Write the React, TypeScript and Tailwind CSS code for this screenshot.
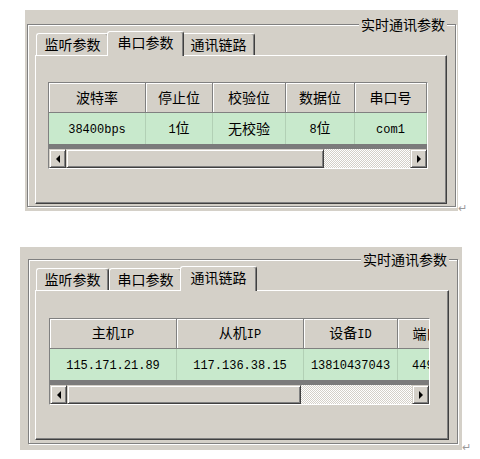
import React from "react";

const Txt = ({ s }: { s: string }) => {
  const parts = s.split(/([\x20-\x7e]+)/).filter((p) => p.length > 0);
  return (
    <span className="whitespace-nowrap">
      {parts.map((p, i) =>
        /^[\x20-\x7e]+$/.test(p) ? (
          <span key={i} className="font-['Liberation_Mono',monospace] text-[12px]">
            {p}
          </span>
        ) : (
          <span key={i}>{p}</span>
        )
      )}
    </span>
  );
};

const TABS = ["监听参数", "串口参数", "通讯链路"];

function TabStrip({ active }: { active: number }) {
  return (
    <div className="relative z-10 flex items-end h-[24px] pl-[1px]">
      {TABS.map((t, i) =>
        i === active ? (
          <div
            key={t}
            className="relative z-10 w-[77px] -mx-[2px] h-[25px] -mb-px flex-none bg-[#d4d0c8] border-t border-l border-r border-t-white border-l-white border-r-[#404040] shadow-[inset_-1px_0_0_#808080] rounded-t-[3px] flex items-start justify-center pt-[2px] text-[14px] leading-[17px] text-black"
          >
            {t}
          </div>
        ) : (
          <div
            key={t}
            className="w-[73px] h-[22px] flex-none bg-[#d4d0c8] border-t border-l border-r border-t-white border-l-white border-r-[#404040] shadow-[inset_-1px_0_0_#808080] rounded-t-[3px] flex items-center justify-center text-[14px] leading-[17px] text-black"
          >
            {t}
          </div>
        )
      )}
    </div>
  );
}

type Col = { label: string; w: string; val: string };

function ScrollBtn({ dir }: { dir: "l" | "r" }) {
  return (
    <div className="w-[17px] h-full flex-none bg-[#d4d0c8] border border-t-[#d4d0c8] border-l-[#d4d0c8] border-r-[#404040] border-b-[#404040] shadow-[inset_1px_1px_0_#fff,inset_-1px_-1px_0_#808080] flex items-center justify-center">
      {dir === "l" ? (
        <div className="w-0 h-0 border-y-[4px] border-y-transparent border-r-[4px] border-r-black" />
      ) : (
        <div className="w-0 h-0 border-y-[4px] border-y-transparent border-l-[4px] border-l-black" />
      )}
    </div>
  );
}

function ListView({ cols, width, thumb }: { cols: Col[]; width: string; thumb: string }) {
  return (
    <div
      className={`${width} flex flex-col overflow-hidden border border-t-[#808080] border-l-[#808080] border-r-white border-b-white`}
    >
      <div className="flex h-[30px] bg-[#d4d0c8]">
        {cols.map((c) => (
          <div
            key={c.label}
            className={`${c.w} flex-none flex items-center justify-center border-r border-b border-r-[#808080] border-b-[#808080] shadow-[inset_1px_1px_0_#fff] text-[14px] leading-[17px] text-black`}
          >
            <Txt s={c.label} />
          </div>
        ))}
      </div>
      <div className="flex h-[31px] bg-[#c8e9cc]">
        {cols.map((c) => (
          <div
            key={c.label}
            className={`${c.w} flex-none flex items-center justify-center border-r border-r-[#b2d0b5] text-[14px] leading-[17px] text-black overflow-hidden`}
          >
            <Txt s={c.val} />
          </div>
        ))}
      </div>
      <div className="h-[5px] bg-[#7b7b7b]" />
      <div className="flex h-[19px]">
        <ScrollBtn dir="l" />
        <div
          className={`${thumb} h-full flex-none bg-[#d4d0c8] border border-t-[#d4d0c8] border-l-[#d4d0c8] border-r-[#404040] border-b-[#404040] shadow-[inset_1px_1px_0_#fff,inset_-1px_-1px_0_#808080]`}
        />
        <div className="flex-1 h-full bg-[repeating-conic-gradient(#ffffff_0_25%,#d4d0c8_0_50%)] bg-[length:2px_2px]" />
        <ScrollBtn dir="r" />
      </div>
    </div>
  );
}

function Panel({
  outer,
  group,
  body,
  active,
  cols,
  width,
  thumb,
}: {
  outer: string;
  group: string;
  body: string;
  active: number;
  cols: Col[];
  width: string;
  thumb: string;
}) {
  return (
    <div className={`${outer} flex-none bg-[#d4d0c8] flex flex-col`}>
      <div
        className={`${group} relative flex-1 flex flex-col border border-[#808080] shadow-[inset_1px_1px_0_#fff,1px_1px_0_#fff]`}
      >
        <div className="absolute right-[8px] -top-[10px] px-[2px] bg-[#d4d0c8] text-[14px] leading-[18px] text-black">
          实时通讯参数
        </div>
        <TabStrip active={active} />
        <div
          className={`${body} flex-1 bg-[#d4d0c8] border-t border-l border-r border-b border-t-white border-l-white border-r-[#404040] border-b-[#404040] shadow-[inset_-1px_-1px_0_#808080]`}
        >
          <ListView cols={cols} width={width} thumb={thumb} />
        </div>
      </div>
    </div>
  );
}

export default function App() {
  const cols1: Col[] = [
    { label: "波特率", w: "w-[97px]", val: "38400bps" },
    { label: "停止位", w: "w-[67px]", val: "1位" },
    { label: "校验位", w: "w-[73px]", val: "无校验" },
    { label: "数据位", w: "w-[69px]", val: "8位" },
    { label: "串口号", w: "w-[72px]", val: "com1" },
  ];
  const cols2: Col[] = [
    { label: "主机IP", w: "w-[127px]", val: "115.171.21.89" },
    { label: "从机IP", w: "w-[127px]", val: "117.136.38.15" },
    { label: "设备ID", w: "w-[94px]", val: "13810437043" },
    { label: "端口", w: "w-[58px]", val: "4495" },
  ];
  return (
    <div className="w-[480px] h-[459px] bg-white flex flex-col font-['Noto_Sans_CJK_SC',sans-serif] overflow-hidden">
      <div className="flex items-end mt-[10px] ml-[25px]">
        <Panel
          outer="w-[433px] h-[201px] pt-[14px] pb-[4px] pl-[2px] pr-[2px]"
          group="pt-[6px] pb-[2px] pl-[7px] pr-[8px]"
          body="pt-[26px] pl-[12px]"
          active={1}
          cols={cols1}
          width="w-[380px]"
          thumb="w-[258px]"
        />
        <span className="text-[11px] leading-none text-[#9a9a9a] -mb-[2px]">↵</span>
      </div>
      <div className="flex items-end mt-[36px] ml-[20px]">
        <Panel
          outer="w-[442px] h-[203px] pt-[12px] pb-[6px] pl-[8px] pr-[4px]"
          group="pt-[6px] pb-[3px] pl-[6px] pr-[8px]"
          body="pt-[27px] pl-[13px]"
          active={2}
          cols={cols2}
          width="w-[381px]"
          thumb="w-[234px]"
        />
        <span className="text-[11px] leading-none text-[#9a9a9a] -mb-[2px]">↵</span>
      </div>
    </div>
  );
}
